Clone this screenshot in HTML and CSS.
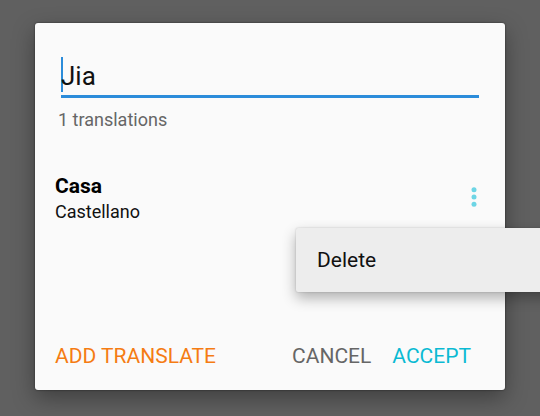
FILE: index.html
```html
<!DOCTYPE html>
<html lang="en">
<head>
<meta charset="utf-8">
<meta name="viewport" content="width=device-width, initial-scale=1">
<title>Jia</title>
<link rel="stylesheet" href="styles.css">
</head>
<body>
<main class="dialog" role="dialog" aria-labelledby="count">
  <div class="field">
    <span class="caret"></span>
    <input class="field-input" id="word" type="text" value="Jia">
  </div>
  <label class="count" id="count" for="word">1 translations</label>
  <section class="entry">
    <div class="entry-text">
      <strong class="word">Casa</strong>
      <span class="language">Castellano</span>
    </div>
    <button class="more" type="button" aria-haspopup="menu">
      <svg class="more-icon" viewBox="0 0 6 20" aria-hidden="true">
        <circle cx="3" cy="2.7" r="2.5"/>
        <circle cx="3" cy="10" r="2.5"/>
        <circle cx="3" cy="17.3" r="2.5"/>
      </svg>
    </button>
    <div class="menu" role="menu">
      <button class="menu-item" type="button" role="menuitem">Delete</button>
    </div>
  </section>
  <footer class="actions">
    <button class="action action-add" type="button">ADD TRANSLATE</button>
    <button class="action action-cancel" type="button">CANCEL</button>
    <button class="action action-accept" type="button">ACCEPT</button>
  </footer>
</main>
</body>
</html>
```
FILE: styles.css
```css
* {
  box-sizing: border-box;
}

body {
  margin: 0;
  min-height: 100vh;
  padding: 23px 35px 26px;
  background: #606060;
  font-family: Roboto, sans-serif;
  color: #111;
  display: flex;
  overflow: hidden;
}

button {
  padding: 0;
  border: 0;
  background: none;
  font: inherit;
  color: inherit;
  text-align: left;
}

.dialog {
  flex: 1;
  min-width: 0;
  display: flex;
  flex-direction: column;
  padding: 34px 26px 20px;
  border-radius: 3px;
  background: #fafafa;
  box-shadow: 0 0 2px rgba(0, 0, 0, 0.6), 0 8px 22px rgba(0, 0, 0, 0.35);
}

.field {
  position: relative;
}

.field-input {
  position: relative;
  display: block;
  width: 100%;
  height: 41px;
  padding: 0;
  border: 0;
  border-bottom: 3px solid #2b8cda;
  border-radius: 0;
  outline: 0;
  background: none;
  font: 26px Roboto, sans-serif;
  color: #111;
}

.caret {
  position: absolute;
  left: 0;
  top: 0;
  width: 2px;
  height: 35px;
  background: #2b8cda;
}

.count {
  margin: 10px -3px 0;
  font-size: 18px;
  line-height: 24px;
  color: #666;
}

.entry {
  position: relative;
  display: flex;
  align-items: flex-start;
  justify-content: space-between;
  margin: 41px 0 0 -6px;
}

.entry-text {
  display: flex;
  flex-direction: column;
}

.word {
  font-size: 21px;
  line-height: 26px;
  color: #000;
}

.language {
  font-size: 18px;
  line-height: 26px;
}

.more {
  width: 10px;
  height: 48px;
  display: flex;
  align-items: center;
  justify-content: center;
}

.more-icon {
  width: 6px;
  height: 20px;
  fill: #6dd5e5;
}

.menu {
  position: absolute;
  top: 55px;
  right: -80px;
  width: 263px;
  border-radius: 2px;
  background: #ededed;
  box-shadow: 0 0 2px rgba(0, 0, 0, 0.2), 0 6px 14px rgba(0, 0, 0, 0.3);
}

.menu-item {
  display: block;
  width: 100%;
  padding: 1px 21px 0;
  font-size: 21px;
  line-height: 63px;
}

.actions {
  display: flex;
  gap: 21px;
  margin: auto 8px 0 -6px;
  font-size: 21px;
  line-height: 28px;
}

.action-add {
  margin-right: auto;
  color: #f57c13;
}

.action-cancel {
  color: #666;
}

.action-accept {
  color: #0bbad3;
}
```
